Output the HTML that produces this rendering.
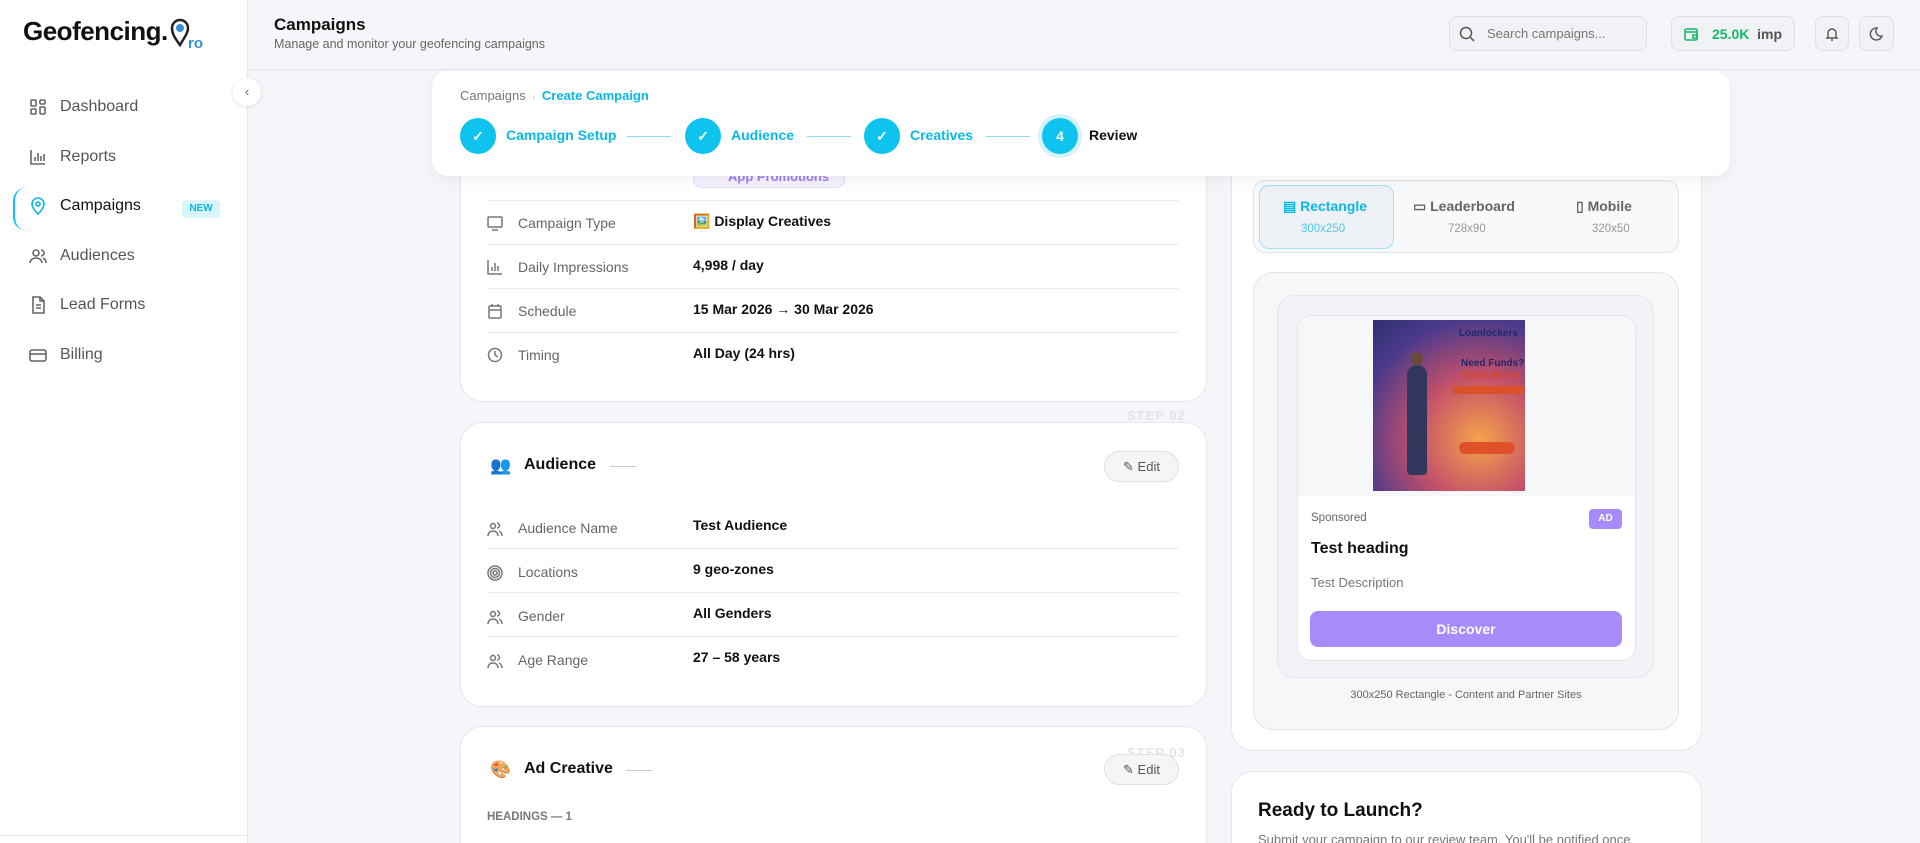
<!DOCTYPE html>
<html style="width:1920px;height:843px;overflow:hidden"><head><meta charset="utf-8"><style>
*{box-sizing:border-box;margin:0;padding:0}
body{width:1920px;height:843px;overflow:hidden;background:#f4f6f9;font-family:"Liberation Sans",sans-serif;color:#111;position:relative}
.a{position:absolute}
.side{left:0;top:0;width:248px;height:843px;background:#fff;border-right:1px solid #e6e8ec}
.nav{position:absolute;left:29px;font-size:16px;color:#555;display:flex;align-items:center}
.nav svg{width:18px;height:18px;margin-right:13px;stroke:#666;fill:none;stroke-width:1.6}
.card{position:absolute;background:#fff;border:1px solid #e3e6ea;border-radius:22px}
.row{position:absolute;left:487px;width:692px;height:44px;border-bottom:1px solid #e8eaee}
.lbl{position:absolute;left:31px;font-size:14px;color:#666}
.val{position:absolute;left:206px;font-size:14px;color:#111;font-weight:bold}
.ic{position:absolute;left:0;width:16px;height:16px;stroke:#777;fill:none;stroke-width:1.5}
.step{position:absolute;top:118px;width:36px;height:36px;border-radius:50%;background:#0ec4ee;color:#fff;display:flex;align-items:center;justify-content:center;font-size:14px;font-weight:bold}
.slbl{position:absolute;top:127px;font-size:14px;font-weight:bold;color:#0ab8e6}
.sline{position:absolute;top:136px;height:1px;background:#8ed9f0}
.edit{position:absolute;width:75px;height:31px;border:1px solid #dde0e5;border-radius:16px;background:#f4f5f7;font-size:13px;color:#555;display:flex;align-items:center;justify-content:center;gap:5px}
.stepno{position:absolute;font-size:13px;font-weight:bold;color:#e2e4e8;letter-spacing:1px}
</style></head><body>

<div class="a side">
  <div class="a" style="left:23px;top:16px;font-size:26px;font-weight:bold;letter-spacing:-0.5px">Geofencing.<span style="display:inline-block;width:20px"></span></div>
  <svg class="a" style="left:170px;top:17px" width="40" height="34" viewBox="0 0 40 34"><path d="M10 28 C4 20 2 16 2 11 A8 8 0 0 1 18 11 C18 16 14 21 10 28Z" fill="none" stroke="#222" stroke-width="2.5"/><circle cx="10" cy="11" r="4" fill="#3a8fd9"/><text x="18" y="31" font-size="15" font-weight="bold" fill="#3a8fd9" font-family="Liberation Sans">ro</text></svg>
  <div class="nav" style="top:98px"><svg viewBox="0 0 18 18"><rect x="2" y="2" width="5" height="6" rx="1"/><rect x="11" y="2" width="5" height="4" rx="1"/><rect x="2" y="11" width="5" height="5" rx="1"/><rect x="11" y="9" width="5" height="7" rx="1"/></svg>Dashboard</div>
  <div class="nav" style="top:148px"><svg viewBox="0 0 18 18"><path d="M2 2v14h14M6 13V9M9 13V5M12 13V8M15 13V6"/></svg>Reports</div>
  <div class="a" style="left:13px;top:187px;width:30px;height:44px;border-left:2px solid #0ec4ee;border-radius:14px 0 0 14px"></div>
  <div class="nav" style="top:197px;color:#111"><svg viewBox="0 0 18 18" style="stroke:#0ab8e6"><path d="M9 17s-6-5.5-6-10a6 6 0 0 1 12 0c0 4.5-6 10-6 10z"/><circle cx="9" cy="7" r="2"/></svg>Campaigns</div>
  <div class="a" style="left:182px;top:200px;width:38px;height:18px;background:#d9f5fd;border-radius:4px;color:#0ab8e6;font-size:10px;font-weight:bold;text-align:center;line-height:18px">NEW</div>
  <div class="nav" style="top:247px"><svg viewBox="0 0 18 18"><circle cx="7" cy="6" r="3"/><path d="M1 16c0-3 3-5 6-5s6 2 6 5M12 3a3 3 0 0 1 0 6M14 11c2 1 3 3 3 5"/></svg>Audiences</div>
  <div class="nav" style="top:296px"><svg viewBox="0 0 18 18"><path d="M4 1h7l4 4v12H4z M11 1v4h4 M7 9h5M7 12h5"/></svg>Lead Forms</div>
  <div class="nav" style="top:346px"><svg viewBox="0 0 18 18"><rect x="1" y="4" width="16" height="11" rx="2"/><path d="M1 8h16"/></svg>Billing</div>
  <div class="a" style="left:0;top:835px;width:248px;height:1px;background:#e6e8ec"></div>
</div>
<div class="a" style="left:233px;top:78px;width:28px;height:28px;border-radius:50%;background:#fff;box-shadow:0 1px 4px rgba(0,0,0,.12);font-size:13px;color:#666;text-align:center;line-height:27px">‹</div>

<!-- header -->
<div class="a" style="left:249px;top:69px;width:1671px;height:1px;background:#e3e6ea"></div>
<div class="a" style="left:274px;top:15px;font-size:17px;font-weight:bold">Campaigns</div>
<div class="a" style="left:274px;top:37px;font-size:12.5px;color:#666">Manage and monitor your geofencing campaigns</div>
<div class="a" style="left:1449px;top:16px;width:198px;height:35px;border:1px solid #dcdfe4;border-radius:8px;background:#f0f2f5;font-size:13px;color:#777;padding:9px 0 0 37px">Search campaigns...</div>
<svg class="a" style="left:1459px;top:26px" width="16" height="16" viewBox="0 0 16 16" fill="none" stroke="#555" stroke-width="1.5"><circle cx="7" cy="7" r="5.5"/><path d="M11 11l4 4"/></svg>
<div class="a" style="left:1671px;top:16px;width:124px;height:35px;border:1px solid #dcdfe4;border-radius:8px;background:#f0f2f5;font-size:14px;padding:9px 0 0 40px"><b style="color:#16b86a">25.0K</b> <span style="color:#555;font-weight:bold">&nbsp;imp</span></div>
<svg class="a" style="left:1683px;top:26px" width="16" height="16" viewBox="0 0 16 16" fill="none" stroke="#16b86a" stroke-width="1.6"><rect x="2" y="3" width="12" height="11" rx="1.5"/><path d="M2 6h12M10 9h4v3h-4z"/></svg>
<div class="a" style="left:1815px;top:16px;width:34px;height:35px;border:1px solid #dcdfe4;border-radius:8px;background:#f0f2f5"></div>
<svg class="a" style="left:1824px;top:26px" width="16" height="16" viewBox="0 0 16 16" fill="none" stroke="#555" stroke-width="1.4"><path d="M4 11V7a4 4 0 0 1 8 0v4l1 1H3zM7 14h2"/></svg>
<div class="a" style="left:1859px;top:16px;width:35px;height:35px;border:1px solid #dcdfe4;border-radius:8px;background:#f0f2f5"></div>
<svg class="a" style="left:1868px;top:26px" width="16" height="16" viewBox="0 0 16 16" fill="none" stroke="#555" stroke-width="1.4"><path d="M9 2a6 6 0 1 0 5 8A5 5 0 0 1 9 2z"/></svg>

<!-- left card 1 -->
<div class="card" style="left:460px;top:100px;width:747px;height:302px;border-top:none;border-radius:0 0 22px 22px"></div>
<div class="a" style="left:693px;top:160px;width:152px;height:28px;border:1px solid #e3dafc;background:#f5f1ff;border-radius:9px;font-size:13px;color:#9b7df0;padding:8px 0 0 34px;font-weight:bold">App Promotions</div>
<div class="row" style="top:157px"></div>
<div class="row" style="top:201px"><svg class="ic" style="top:14px" viewBox="0 0 16 16"><rect x="1" y="2" width="14" height="10" rx="1"/><path d="M5 15h6"/></svg><span class="lbl" style="top:14px">Campaign Type</span><span class="val" style="top:12px">🖼️ Display Creatives</span></div>
<div class="row" style="top:245px"><svg class="ic" style="top:14px" viewBox="0 0 16 16"><path d="M1 1v14h14M5 12V8M8 12V4M11 12V7"/></svg><span class="lbl" style="top:14px">Daily Impressions</span><span class="val" style="top:12px">4,998 / day</span></div>
<div class="row" style="top:289px"><svg class="ic" style="top:14px" viewBox="0 0 16 16"><rect x="2" y="3" width="12" height="12" rx="1"/><path d="M2 7h12M5 1v3M11 1v3"/></svg><span class="lbl" style="top:14px">Schedule</span><span class="val" style="top:12px">15 Mar 2026 → 30 Mar 2026</span></div>
<div class="row" style="top:333px;border:none"><svg class="ic" style="top:14px" viewBox="0 0 16 16"><circle cx="8" cy="8" r="6.5"/><path d="M8 4v4l3 2"/></svg><span class="lbl" style="top:14px">Timing</span><span class="val" style="top:12px">All Day (24 hrs)</span></div>

<!-- card 2 -->
<div class="card" style="left:460px;top:422px;width:747px;height:285px"></div>
<div class="stepno" style="left:1127px;top:408px">STEP 02</div>
<div class="a" style="left:490px;top:456px;font-size:17px">👥</div>
<div class="a" style="left:524px;top:456px;font-size:16px;font-weight:bold">Audience</div>
<div class="a" style="left:610px;top:466px;width:27px;height:1px;background:#ccc"></div>
<div class="edit" style="left:1104px;top:451px">✎ Edit</div>
<div class="row" style="top:505px"><svg class="ic" style="top:16px" viewBox="0 0 16 16"><circle cx="6" cy="5" r="2.5"/><path d="M1 15c0-3 2-5 5-5s5 2 5 5M10 2a2.5 2.5 0 0 1 0 5M12 10c2 1 3 3 3 5"/></svg><span class="lbl" style="top:15px">Audience Name</span><span class="val" style="top:12px">Test Audience</span></div>
<div class="row" style="top:549px"><svg class="ic" style="top:16px" viewBox="0 0 16 16"><circle cx="8" cy="8" r="7"/><circle cx="8" cy="8" r="4.5"/><circle cx="8" cy="8" r="2"/></svg><span class="lbl" style="top:15px">Locations</span><span class="val" style="top:12px">9 geo-zones</span></div>
<div class="row" style="top:593px"><svg class="ic" style="top:16px" viewBox="0 0 16 16"><circle cx="6" cy="5" r="2.5"/><path d="M1 15c0-3 2-5 5-5s5 2 5 5M10 2a2.5 2.5 0 0 1 0 5M12 10c2 1 3 3 3 5"/></svg><span class="lbl" style="top:15px">Gender</span><span class="val" style="top:12px">All Genders</span></div>
<div class="row" style="top:637px;border:none"><svg class="ic" style="top:16px" viewBox="0 0 16 16"><circle cx="6" cy="5" r="2.5"/><path d="M1 15c0-3 2-5 5-5s5 2 5 5M10 2a2.5 2.5 0 0 1 0 5M12 10c2 1 3 3 3 5"/></svg><span class="lbl" style="top:15px">Age Range</span><span class="val" style="top:12px">27 – 58 years</span></div>

<!-- card 3 -->
<div class="card" style="left:460px;top:726px;width:747px;height:140px"></div>
<div class="stepno" style="left:1127px;top:745px">STEP 03</div>
<div class="a" style="left:490px;top:760px;font-size:17px">🎨</div>
<div class="a" style="left:524px;top:760px;font-size:16px;font-weight:bold">Ad Creative</div>
<div class="a" style="left:626px;top:770px;width:27px;height:1px;background:#ccc"></div>
<div class="edit" style="left:1104px;top:754px">✎ Edit</div>
<div class="a" style="left:487px;top:811px;font-size:11.5px;font-weight:bold;color:#777">HEADINGS — 1</div>

<!-- right panel -->
<div class="card" style="left:1231px;top:100px;width:471px;height:651px;border-top:none;border-radius:0 0 22px 22px"></div>
<div class="a" style="left:1253px;top:180px;width:426px;height:73px;border:1px solid #e1e4e8;border-radius:12px;background:#f8f9fb"></div>
<div class="a" style="left:1259px;top:185px;width:135px;height:64px;border:1px solid #9fe3f5;border-radius:10px;background:#eef2f6"></div>
<div class="a" style="left:1283px;top:198px;font-size:14px;font-weight:bold;color:#0ab8e6">▤ Rectangle</div>
<div class="a" style="left:1301px;top:223px;font-size:11.5px;color:#4cc8ea">300x250</div>
<div class="a" style="left:1413px;top:198px;font-size:14px;font-weight:bold;color:#666">▭ Leaderboard</div>
<div class="a" style="left:1448px;top:223px;font-size:11.5px;color:#999">728x90</div>
<div class="a" style="left:1576px;top:198px;font-size:14px;font-weight:bold;color:#666">▯ Mobile</div>
<div class="a" style="left:1592px;top:223px;font-size:11.5px;color:#999">320x50</div>

<div class="a" style="left:1253px;top:272px;width:426px;height:458px;border:1px solid #e1e4e8;border-radius:20px;background:#f6f7f9"></div>
<div class="a" style="left:1277px;top:295px;width:377px;height:383px;border:1px solid #e3e5e9;border-radius:18px;background:#f2f3f6"></div>
<div class="a" style="left:1297px;top:315px;width:339px;height:346px;border:1px solid #e3e5e9;border-radius:14px;background:#fff;overflow:hidden">
  <div style="height:180px;background:#f6f7f9"></div>
</div>
<div class="a" style="left:1373px;top:320px;width:152px;height:171px;background:radial-gradient(circle at 70% 70%,#f7a24a 0%,#c2506a 40%,#4b3a8c 75%,#2e2f6e 100%);overflow:hidden">
  <div class="a" style="left:86px;top:8px;font-size:10px;font-weight:bold;color:#1c2a6b">Loanlockers</div>
  <div class="a" style="left:88px;top:38px;font-size:10px;font-weight:bold;color:#1c2a6b;text-align:center;line-height:12px">Need Funds?<br><span style="color:#d9442a">Don't Worry.</span></div>
  <div class="a" style="left:80px;top:66px;width:70px;height:8px;background:#d9522a"></div>
  <div class="a" style="left:86px;top:122px;width:56px;height:12px;border-radius:6px;background:#e0502a"></div>
  <div class="a" style="left:34px;top:45px;width:20px;height:110px;background:#33375e;border-radius:10px 10px 4px 4px"></div>
  <div class="a" style="left:38px;top:32px;width:12px;height:14px;background:#6b4a3a;border-radius:50%"></div>
</div>
<div class="a" style="left:1311px;top:512px;font-size:11.5px;color:#666">Sponsored</div>
<div class="a" style="left:1589px;top:509px;width:33px;height:20px;border-radius:4px;background:#a78bfa;color:#fff;font-size:10px;font-weight:bold;text-align:center;line-height:20px">AD</div>
<div class="a" style="left:1311px;top:540px;font-size:16px;font-weight:bold">Test heading</div>
<div class="a" style="left:1311px;top:575px;font-size:13px;color:#777">Test Description</div>
<div class="a" style="left:1310px;top:611px;width:312px;height:36px;border-radius:8px;background:#a78bfa;color:#fff;font-size:14px;font-weight:bold;text-align:center;line-height:36px">Discover</div>
<div class="a" style="left:1253px;top:689px;width:426px;text-align:center;font-size:11px;color:#666">300x250 Rectangle - Content and Partner Sites</div>

<div class="card" style="left:1231px;top:771px;width:471px;height:120px"></div>
<div class="a" style="left:1258px;top:800px;font-size:19px;font-weight:bold">Ready to Launch?</div>
<div class="a" style="left:1258px;top:832px;font-size:13px;color:#777">Submit your campaign to our review team. You'll be notified once</div>

<!-- stepper card -->
<div class="a" style="left:432px;top:71px;width:1298px;height:105px;background:#fff;border-radius:16px;box-shadow:0 4px 16px rgba(0,0,0,.06)"></div>
<div class="a" style="left:460px;top:88px;font-size:13px;color:#777">Campaigns <span style="color:#ccc;font-size:10px">&nbsp;›&nbsp;</span> <b style="color:#0ab8e6">Create Campaign</b></div>
<div class="step" style="left:460px">✓</div><div class="slbl" style="left:506px">Campaign Setup</div><div class="sline" style="left:627px;width:44px"></div>
<div class="step" style="left:685px">✓</div><div class="slbl" style="left:731px">Audience</div><div class="sline" style="left:807px;width:44px"></div>
<div class="step" style="left:864px">✓</div><div class="slbl" style="left:910px">Creatives</div><div class="sline" style="left:986px;width:44px"></div>
<div class="step" style="left:1042px;box-shadow:0 0 0 4px #d3f3fc">4</div><div class="slbl" style="left:1089px;color:#111">Review</div>
</body></html>
